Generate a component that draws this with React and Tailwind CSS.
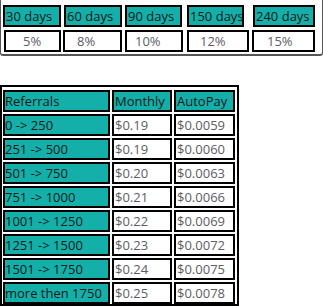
import React from "react";

const periods = [
  { label: "30 days", ml: "ml-0", w: "w-[58px]" },
  { label: "60 days", ml: "ml-[3px]", w: "w-[58px]" },
  { label: "90 days", ml: "ml-[3px]", w: "w-[57px]" },
  { label: "150 days", ml: "ml-[5px]", w: "w-[57px]" },
  { label: "240 days", ml: "ml-[9px]", w: "w-[62px]" },
];

const rates = [
  { value: "5%", ml: "ml-[1px]", w: "w-[57px]", pl: "pl-[17px]" },
  { value: "8%", ml: "ml-[2px]", w: "w-[59px]", pl: "pl-[12px]" },
  { value: "10%", ml: "ml-[3px]", w: "w-[58px]", pl: "pl-[8px]" },
  { value: "12%", ml: "ml-[4px]", w: "w-[62px]", pl: "pl-[11px]" },
  { value: "15%", ml: "ml-[3px]", w: "w-[63px]", pl: "pl-[13px]" },
];

const tiers = [
  ["0 -> 250", "$0.19", "$0.0059"],
  ["251 -> 500", "$0.19", "$0.0060"],
  ["501 -> 750", "$0.20", "$0.0063"],
  ["751 -> 1000", "$0.21", "$0.0066"],
  ["1001 -> 1250", "$0.22", "$0.0069"],
  ["1251 -> 1500", "$0.23", "$0.0072"],
  ["1501 -> 1750", "$0.24", "$0.0075"],
  ["more then 1750", "$0.25", "$0.0078"],
];

const teal = "bg-[#13afa8] text-[#151a1a]";
const white = "bg-white text-[#5c5c66]";

function Cell({ children, className }) {
  return (
    <div
      className={`h-[22px] flex items-center border-2 border-black whitespace-nowrap ${className}`}
    >
      {children}
    </div>
  );
}

export default function App() {
  return (
    <div
      className="w-[323px] h-[306px] overflow-hidden bg-white text-[13px] leading-none"
      style={{ fontFamily: '"Open Sans", sans-serif' }}
    >
      {/* plans by period */}
      <div className="w-[323px] border-x border-b-2 border-[#555] rounded-b-[3px] pl-[2px] pt-[5px] pb-[2px]">
        <div className="flex">
          {periods.map((p) => (
            <Cell key={p.label} className={`${p.ml} ${p.w} ${teal} pl-[1px]`}>
              {p.label}
            </Cell>
          ))}
        </div>
        <div className="flex mt-[3px]">
          {rates.map((r) => (
            <Cell key={r.value} className={`${r.ml} ${r.w} ${r.pl} ${white}`}>
              {r.value}
            </Cell>
          ))}
        </div>
      </div>

      {/* referral pricing */}
      <div className="mt-[29px] w-[239px] border-2 border-black pl-[1px] pt-[3px] flex flex-col gap-[2px]">
        <div className="flex gap-[2px]">
          <Cell className={`w-[107px] ${teal}`}>Referrals</Cell>
          <Cell className={`w-[60px] ${teal} pl-[1px]`}>Monthly</Cell>
          <Cell className={`w-[61px] ${teal} pl-[1px]`}>AutoPay</Cell>
        </div>
        {tiers.map((t) => (
          <div key={t[0]} className="flex gap-[2px]">
            <Cell className={`w-[107px] ${teal}`}>{t[0]}</Cell>
            <Cell className={`w-[60px] ${white} pl-[1px]`}>{t[1]}</Cell>
            <Cell className={`w-[61px] ${white} pl-[1px]`}>{t[2]}</Cell>
          </div>
        ))}
      </div>
    </div>
  );
}
